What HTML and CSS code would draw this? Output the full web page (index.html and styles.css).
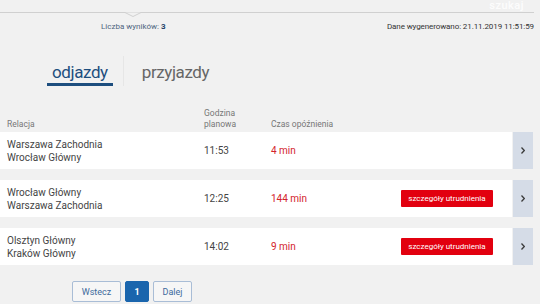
FILE: index.html
```html
<!DOCTYPE html>
<html lang="pl">
<head>
<meta charset="utf-8">
<title>Opóźnienia</title>
<link rel="stylesheet" href="styles.css">
</head>
<body>
<div class="topbar">
  <span class="ghost">szukaj</span>
  <svg class="notch" width="16" height="6" viewBox="0 0 16 6"><path d="M0 0.5 L8 4.5 L16 0.5" fill="#f1f1f1" stroke="#d0d0d0" stroke-width="1"/></svg>
</div>
<div class="info">
  <span class="count">Liczba wyników: <b>3</b></span>
  <span class="gen">Dane wygenerowano: 21.11.2019 11:51:59</span>
</div>
<div class="tabs">
  <span class="tab active">odjazdy</span>
  <span class="divider"></span>
  <span class="tab">przyjazdy</span>
</div>
<div class="thead">
  <span class="c1">Relacja</span>
  <span class="c2">Godzina<br>planowa</span>
  <span class="c3">Czas opóźnienia</span>
</div>
<div class="rows">
  <div class="row">
    <div class="main">
      <span class="c1">Warszawa Zachodnia<br>Wrocław Główny</span>
      <span class="c2">11:53</span>
      <span class="c3 late">4 min</span>
      <span class="c4"></span>
    </div>
    <div class="more"><svg width="4" height="7" viewBox="0 0 4 7"><path d="M0.5 0.5 L3.3 3.5 L0.5 6.5" fill="none" stroke="#3b3b3b" stroke-width="1.3"/></svg></div>
  </div>
  <div class="row">
    <div class="main">
      <span class="c1">Wrocław Główny<br>Warszawa Zachodnia</span>
      <span class="c2">12:25</span>
      <span class="c3 late">144 min</span>
      <span class="c4"><span class="alert">szczegóły utrudnienia</span></span>
    </div>
    <div class="more"><svg width="4" height="7" viewBox="0 0 4 7"><path d="M0.5 0.5 L3.3 3.5 L0.5 6.5" fill="none" stroke="#3b3b3b" stroke-width="1.3"/></svg></div>
  </div>
  <div class="row">
    <div class="main">
      <span class="c1">Olsztyn Główny<br>Kraków Główny</span>
      <span class="c2">14:02</span>
      <span class="c3 late">9 min</span>
      <span class="c4"><span class="alert">szczegóły utrudnienia</span></span>
    </div>
    <div class="more"><svg width="4" height="7" viewBox="0 0 4 7"><path d="M0.5 0.5 L3.3 3.5 L0.5 6.5" fill="none" stroke="#3b3b3b" stroke-width="1.3"/></svg></div>
  </div>
</div>
<div class="pager">
  <span class="pbtn prev">Wstecz</span>
  <span class="pbtn cur">1</span>
  <span class="pbtn next">Dalej</span>
</div>
</body>
</html>
```

FILE: styles.css
```css
html, body {
  margin: 0;
  padding: 0;
}
body {
  background: #f1f1f1;
  font-family: Roboto, "Liberation Sans", Arial, sans-serif;
  width: 540px;
  height: 304px;
  overflow: hidden;
  color: #444;
}
.topbar {
  position: relative;
  height: 12px;
  margin-right: 6px;
  border-bottom: 1px solid #d0d0d0;
  display: flex;
  justify-content: flex-end;
  align-items: flex-start;
}
.ghost {
  display: block;
  font-size: 11px;
  line-height: 11px;
  padding-right: 10px;
  color: rgba(255, 255, 255, 0.85);
  font-weight: 500;
  letter-spacing: 0.5px;
}
.notch {
  position: absolute;
  left: 125px;
  top: 11.5px;
}
.info {
  display: flex;
  justify-content: space-between;
  align-items: center;
  padding: 9px 6px 0 101px;
  font-size: 8px;
  line-height: 10px;
}
.count {
  color: #4e6580;
}
.count b {
  color: #1d3f66;
  font-weight: 700;
}
.gen {
  color: #333;
  letter-spacing: -0.1px;
}
.tabs {
  display: flex;
  align-items: flex-end;
  margin-top: 24px;
  padding-left: 47px;
}
.tab {
  font-size: 17px;
  line-height: 22px;
  padding: 0 5px;
  color: #666;
  letter-spacing: -0.4px;
  border-bottom: 3px solid transparent;
}
.tab.active {
  color: #1d4e7e;
  border-bottom-color: #1d4e7e;
}
.divider {
  width: 1px;
  height: 30px;
  background: #e6e6e6;
  margin: 0 13px 0 10px;
}
.thead, .main {
  display: grid;
  grid-template-columns: 197px 67px 130px 92px;
  align-items: center;
}
.thead {
  margin-top: 22px;
  padding: 0 0 2px 7px;
  font-size: 8.5px;
  line-height: 11px;
  color: #777;
  align-items: end;
  height: 22px;
}
.rows {
  display: flex;
  flex-direction: column;
  gap: 11px;
}
.row {
  display: flex;
  gap: 1px;
  height: 37px;
  margin-right: 7px;
}
.main {
  flex: 1;
  background: #fff;
  padding-left: 7px;
  font-size: 10px;
  line-height: 13px;
  color: #444;
}
.late {
  color: #d3232b;
}
.alert {
  display: flex;
  align-items: center;
  justify-content: center;
  height: 17px;
  background: #e2000f;
  color: #fff;
  font-size: 8px;
  border-radius: 1px;
}
.more {
  width: 20px;
  background: #d5dce7;
  display: flex;
  align-items: center;
  justify-content: center;
}
.pager {
  display: flex;
  gap: 4px;
  padding-left: 72px;
  margin-top: 16px;
}
.pbtn {
  display: flex;
  align-items: center;
  justify-content: center;
  height: 19px;
  border: 1px solid #a9bdd6;
  background: #f6f6f6;
  color: #3d6a9c;
  font-size: 9px;
  border-radius: 2px;
}
.prev { width: 47px; }
.cur {
  width: 22px;
  background: #1a65ad;
  border-color: #1a65ad;
  color: #fff;
  font-weight: 700;
}
.next { width: 37px; }
```
